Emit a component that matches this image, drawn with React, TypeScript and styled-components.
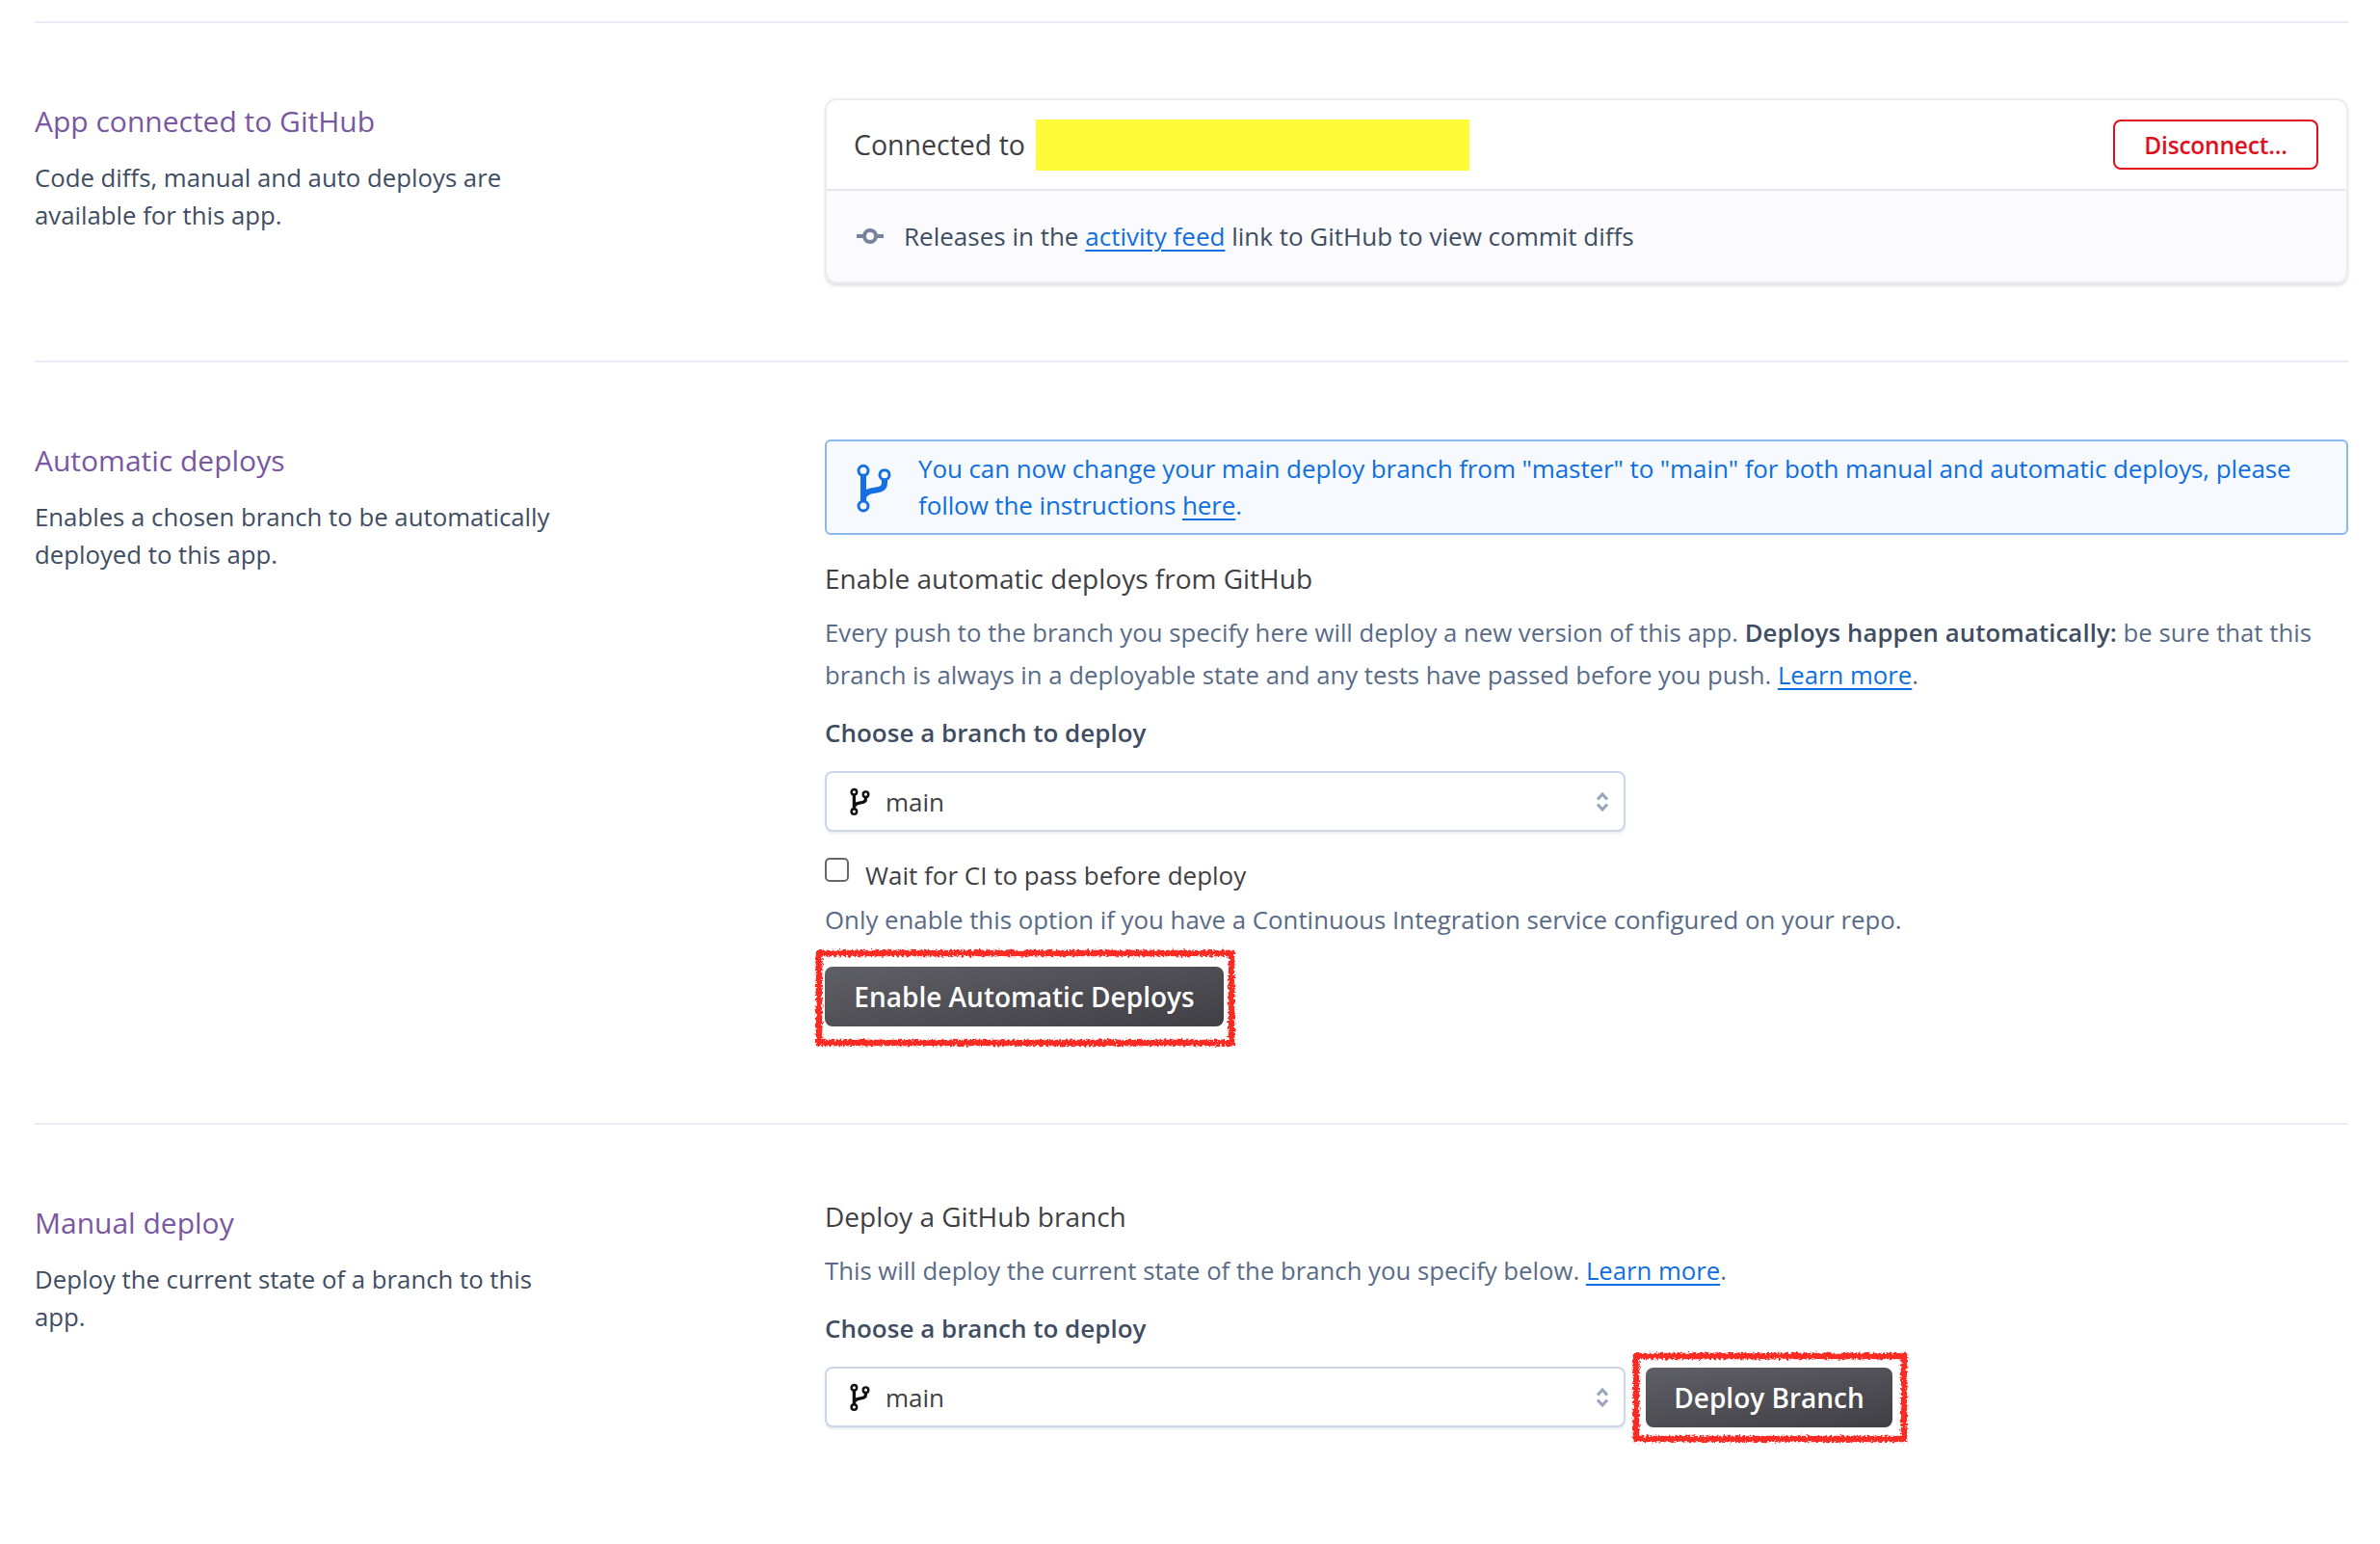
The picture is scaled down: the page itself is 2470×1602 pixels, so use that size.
import React from "react";
import styled, { createGlobalStyle } from "styled-components";

const Global = createGlobalStyle`
  html, body { margin: 0; padding: 0; background: #fff; }
  body { font-family: "Open Sans", "Noto Sans", sans-serif; color: #3f4a5f; }
  * { box-sizing: border-box; }
`;

const Page = styled.div`
  width: 2470px;
  height: 1602px;
  padding: 22px 33px 0 36px;
  overflow: hidden;
`;
const Section = styled.section<{ $bottom: number }>`
  display: grid;
  grid-template-columns: 820px 1fr;
  border-top: 2px solid #e8ebf6;
  padding-bottom: ${(p) => p.$bottom}px;
`;
const Side = styled.div`
  padding-top: 83px;
`;
const Title = styled.h2`
  margin: 0;
  font-size: 30px;
  font-weight: 400;
  line-height: 38px;
  color: #79589f;
`;
const SideText = styled.p`
  margin: 20px 0 0;
  width: 550px;
  font-size: 25.75px;
  line-height: 38.5px;
  color: #3f4d63;
`;
const Main = styled.div<{ $top: number }>`
  padding-top: ${(p) => p.$top}px;
`;
const Card = styled.div`
  border: 2px solid #ececf1;
  border-radius: 12px;
  box-shadow: 0 3px 3px rgba(89, 105, 129, 0.18);
  overflow: hidden;
`;
const CardTop = styled.div`
  height: 94px;
  padding: 0 29px 0 28px;
  display: flex;
  align-items: center;
  font-size: 28.5px;
  color: #3f3f44;
  border-bottom: 2px solid #e4e7f1;
`;
const Redacted = styled.span`
  width: 450px;
  height: 53px;
  margin-left: 11px;
  background: #fffb38;
`;
const Outline = styled.button`
  margin-left: auto;
  width: 213px;
  height: 52px;
  border: 2.5px solid #e2101c;
  border-radius: 8px;
  background: #fff;
  color: #e2101c;
  font: 600 24.5px "Open Sans", sans-serif;
  letter-spacing: -0.2px;
`;
const CardBottom = styled.div`
  height: 94px;
  padding-left: 31px;
  display: flex;
  align-items: center;
  gap: 21px;
  background: #fbfbfd;
  font-size: 26px;
  color: #3f4d63;
`;
const Link = styled.a`
  color: #0f6fe0;
  text-decoration: underline;
  text-underline-offset: 4px;
  text-decoration-thickness: 2px;
`;
const Notice = styled.div`
  height: 99px;
  padding: 9px 0 0 30px;
  display: flex;
  gap: 25px;
  border: 2px solid #8bb8ea;
  border-radius: 6px;
  background: #f6f9fe;
  color: #0f6fe0;
  font-size: 26px;
  line-height: 38px;
  letter-spacing: -0.1px;
`;
const NoticeIcon = styled.svg`
  flex: none;
  margin-top: 13px;
  width: 40px;
  height: 56px;
`;
const NoticeText = styled.div`
  width: 1450px;
`;
const Heading = styled.h3<{ $gap: number }>`
  margin: ${(p) => p.$gap}px 0 0;
  font-size: 28px;
  font-weight: 400;
  line-height: 38px;
  color: #3f3f44;
`;
const Body = styled.p`
  margin: 16px 0 0;
  font-size: 25.72px;
  line-height: 44px;
  color: #596b87;
  b {
    font-weight: 600;
    letter-spacing: 0.1px;
    color: #3f4d63;
  }
`;
const Label = styled.div`
  margin-top: 18px;
  font-size: 26px;
  font-weight: 600;
  line-height: 38px;
  color: #3f4d63;
`;
const SelectBox = styled.div<{ $gap: number }>`
  flex: none;
  width: 831px;
  height: 63px;
  margin-top: ${(p) => p.$gap}px;
  padding: 0 15px 0 24px;
  display: flex;
  align-items: center;
  gap: 15px;
  border: 2px solid #cdd6e8;
  border-radius: 8px;
  box-shadow: 0 2px 2px rgba(89, 105, 129, 0.12);
  font-size: 26px;
  color: #3f3f44;
`;
const BranchSmall = styled.svg`
  flex: none;
  width: 22px;
  height: 30px;
`;
const Chevrons = styled.svg`
  margin-left: auto;
  width: 14px;
  height: 22px;
`;
const CheckRow = styled.label`
  margin-top: 26px;
  display: flex;
  gap: 17px;
  font-size: 26px;
  line-height: 38px;
  color: #3f3f44;
`;
const Check = styled.input`
  appearance: none;
  flex: none;
  width: 25px;
  height: 25px;
  margin: 1px 0 0;
  border: 2px solid #66666c;
  border-radius: 5px;
  background: #fff;
`;
const Hint = styled.p`
  margin: 8px 0 0;
  font-size: 25.8px;
  line-height: 38px;
  color: #596b87;
`;
const Marked = styled.div<{ $top: number; $ml?: number }>`
  position: relative;
  display: inline-block;
  margin-top: ${(p) => p.$top}px;
  margin-left: ${(p) => p.$ml ?? 0}px;
`;
const Scribble = styled.svg`
  position: absolute;
  pointer-events: none;
  overflow: visible;
`;
const Primary = styled.button<{ $w: number }>`
  display: block;
  width: ${(p) => p.$w}px;
  height: 62px;
  padding: 0;
  border: 0;
  border-radius: 8px;
  background: linear-gradient(170deg, #5f5f66, #3f3f44);
  color: #fff;
  font: 600 28px "Open Sans", sans-serif;
`;
const DeployRow = styled.div`
  display: flex;
  align-items: flex-start;
`;

const Branch = ({ color, sw, cw, bg }: { color: string; sw: number; cw: number; bg: string }) => (
  <g fill="none" stroke={color} strokeLinecap="round">
    <path strokeWidth={sw} d="M8 14V39M30 18V21C30 28 24 28 18 29C12 30 8 33 8 38" />
    <circle cx="8" cy="8.3" r="5" strokeWidth={cw} fill={bg} />
    <circle cx="30" cy="12.7" r="5" strokeWidth={cw} fill={bg} />
    <circle cx="8" cy="45" r="5" strokeWidth={cw} fill={bg} />
  </g>
);

const SelectIcon = () => (
  <BranchSmall viewBox="0 0 40 54">
    <Branch color="#111" sw={6} cw={4.5} bg="#fff" />
  </BranchSmall>
);

const Updown = () => (
  <Chevrons viewBox="0 0 14 22">
    <path d="M2 8.5L7 3L12 8.5M2 13.5L7 19L12 13.5" fill="none" stroke="#97a4bc" strokeWidth="3" />
  </Chevrons>
);

const Red = ({ w, h, l, t, id }: { w: number; h: number; l: number; t: number; id: string }) => (
  <Scribble width={w} height={h} viewBox={`0 0 ${w} ${h}`} style={{ left: l, top: t }}>
    <filter id={id} x="-5%" y="-10%" width="110%" height="120%">
      <feTurbulence type="fractalNoise" baseFrequency="0.4" numOctaves="3" seed="4" />
      <feDisplacementMap in="SourceGraphic" scale="6" />
    </filter>
    <rect x="4" y="4" width={w - 8} height={h - 8} fill="none" stroke="#fb2a20" strokeWidth="6.5" filter={`url(#${id})`} />
  </Scribble>
);

const Select = ({ gap }: { gap: number }) => (
  <SelectBox $gap={gap}>
    <SelectIcon />
    main
    <Updown />
  </SelectBox>
);

export default function App() {
  return (
    <Page>
      <Global />
      <Section $bottom={80}>
        <Side>
          <Title>App connected to GitHub</Title>
          <SideText>Code diffs, manual and auto deploys are available for this app.</SideText>
        </Side>
        <Main $top={78}>
          <Card>
            <CardTop>
              Connected to
              <Redacted />
              <Outline>Disconnect...</Outline>
            </CardTop>
            <CardBottom>
              <svg width="28" height="18" viewBox="0 0 28 18">
                <path d="M0 9H7M21 9H28" stroke="#76839d" strokeWidth="4" />
                <circle cx="14" cy="9" r="6" fill="none" stroke="#76839d" strokeWidth="4" />
              </svg>
              <span>
                Releases in the <Link>activity feed</Link> link to GitHub to view commit diffs
              </span>
            </CardBottom>
          </Card>
        </Main>
      </Section>
      <Section $bottom={100}>
        <Side>
          <Title>Automatic deploys</Title>
          <SideText>Enables a chosen branch to be automatically deployed to this app.</SideText>
        </Side>
        <Main $top={80}>
          <Notice>
            <NoticeIcon viewBox="0 0 40 56">
              <Branch color="#1470e4" sw={6} cw={3} bg="#f6f9fe" />
            </NoticeIcon>
            <NoticeText>
              You can now change your main deploy branch from "master" to "main" for both manual and automatic deploys, please follow the instructions <Link>here</Link>.
            </NoticeText>
          </Notice>
          <Heading $gap={26}>Enable automatic deploys from GitHub</Heading>
          <Body>
            Every push to the branch you specify here will deploy a new version of this app. <b>Deploys happen automatically:</b> be sure that this branch is always in a deployable state and any tests have passed before you push. <Link>Learn more</Link>.
          </Body>
          <Label>Choose a branch to deploy</Label>
          <Select gap={21} />
          <CheckRow>
            <Check type="checkbox" />
            Wait for CI to pass before deploy
          </CheckRow>
          <Hint>Only enable this option if you have a Continuous Integration service configured on your repo.</Hint>
          <Marked $top={30}>
            <Primary $w={414}>Enable Automatic Deploys</Primary>
            <Red w={436} h={101} l={-10} t={-18} id="rough-a" />
          </Marked>
        </Main>
      </Section>
      <Section $bottom={0}>
        <Side>
          <Title>Manual deploy</Title>
          <SideText>Deploy the current state of a branch to this app.</SideText>
        </Side>
        <Main $top={76}>
          <Heading $gap={0}>Deploy a GitHub branch</Heading>
          <Body>
            This will deploy the current state of the branch you specify below. <Link>Learn more</Link>.
          </Body>
          <Label>Choose a branch to deploy</Label>
          <DeployRow>
            <Select gap={21} />
            <Marked $top={22} $ml={21}>
              <Primary $w={256}>Deploy Branch</Primary>
              <Red w={286} h={94} l={-14} t={-16} id="rough-b" />
            </Marked>
          </DeployRow>
        </Main>
      </Section>
    </Page>
  );
}
